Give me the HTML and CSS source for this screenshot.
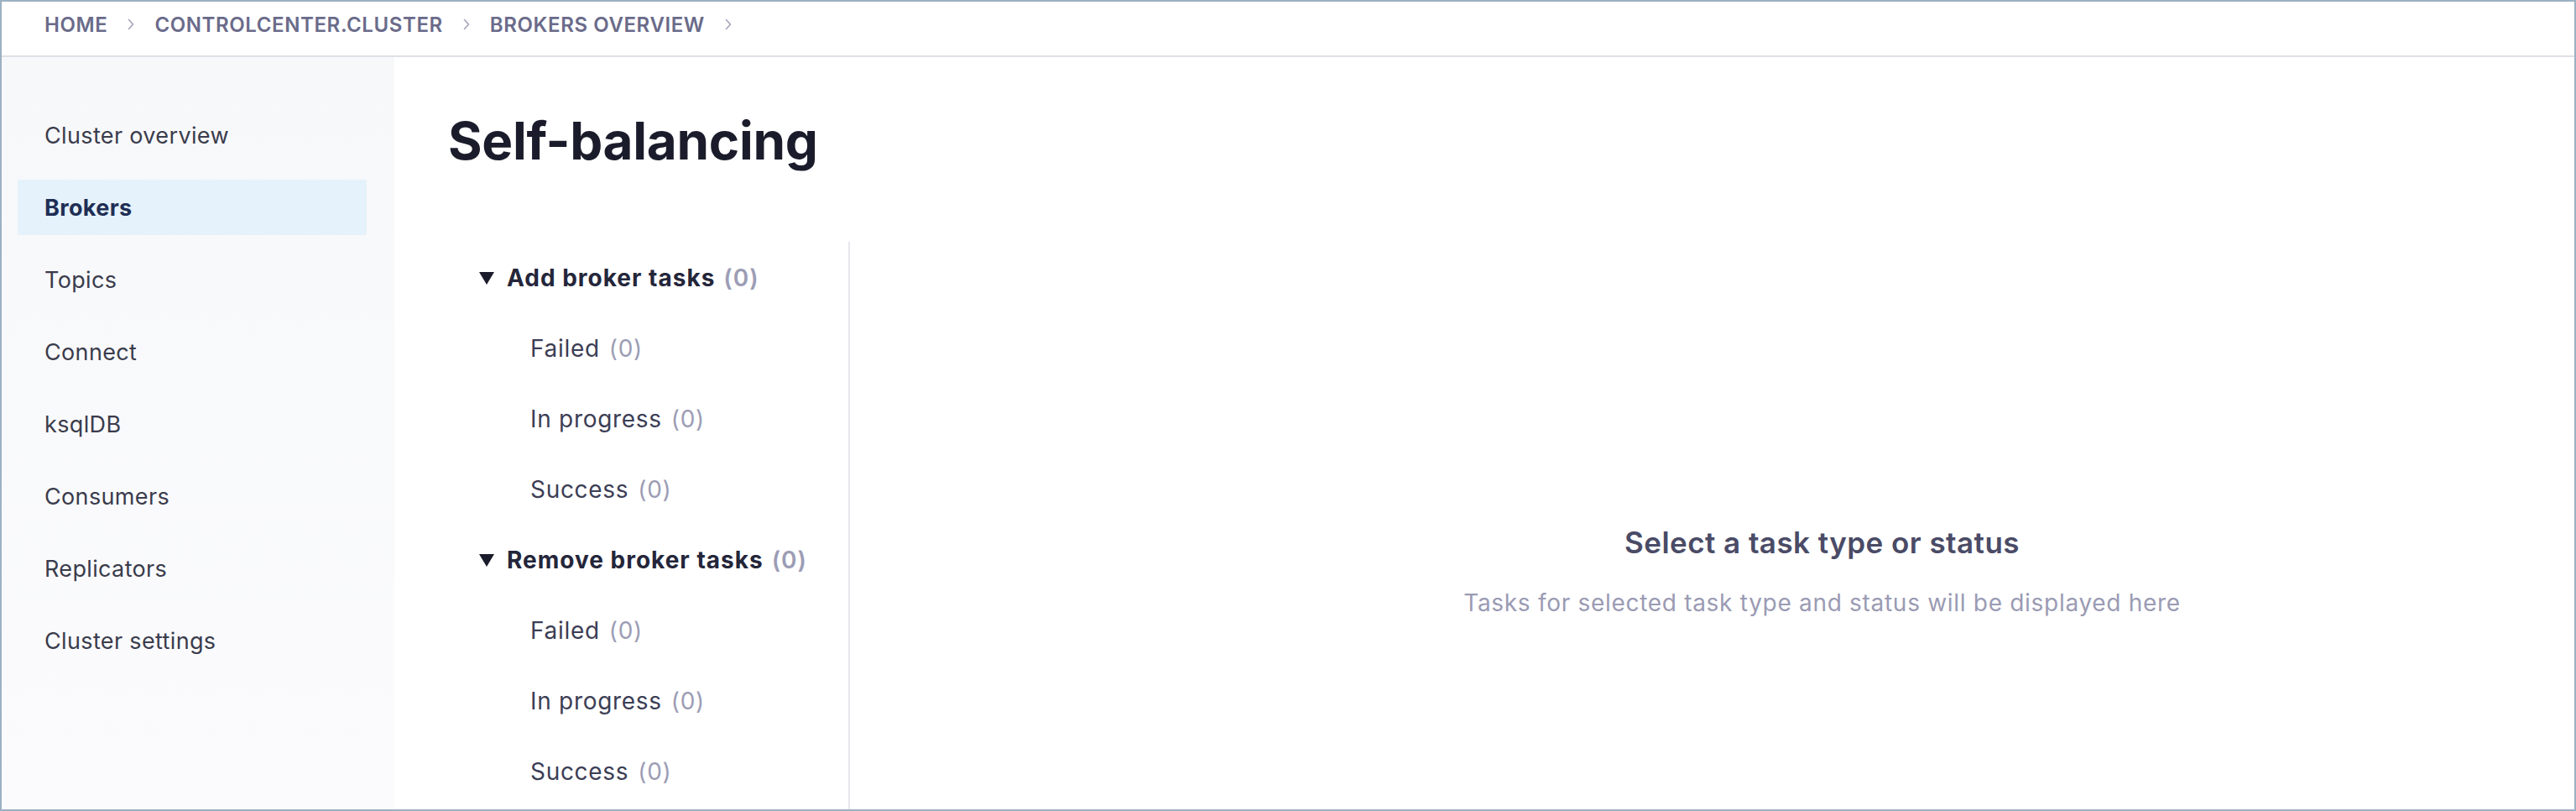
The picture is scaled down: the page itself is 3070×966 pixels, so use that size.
FILE: index.html
```html
<!DOCTYPE html>
<html lang="en">
<head>
<meta charset="utf-8">
<title>Self-balancing</title>
<link rel="stylesheet" href="styles.css">
</head>
<body>
<div class="frame">
  <header class="topbar">
    <nav class="crumbs">
      <span class="crumb">HOME</span>
      <svg class="chev" viewBox="0 0 8 14" width="8" height="14"><path d="M1.5 1.5 L6.5 7 L1.5 12.5" fill="none" stroke="#a3a4ba" stroke-width="1.6" stroke-linecap="round" stroke-linejoin="round"/></svg>
      <span class="crumb">CONTROLCENTER.CLUSTER</span>
      <svg class="chev" viewBox="0 0 8 14" width="8" height="14"><path d="M1.5 1.5 L6.5 7 L1.5 12.5" fill="none" stroke="#a3a4ba" stroke-width="1.6" stroke-linecap="round" stroke-linejoin="round"/></svg>
      <span class="crumb">BROKERS OVERVIEW</span>
      <svg class="chev" viewBox="0 0 8 14" width="8" height="14"><path d="M1.5 1.5 L6.5 7 L1.5 12.5" fill="none" stroke="#a3a4ba" stroke-width="1.6" stroke-linecap="round" stroke-linejoin="round"/></svg>
    </nav>
  </header>
  <div class="body">
    <aside class="sidebar">
      <div class="nav-item">Cluster overview</div>
      <div class="nav-item active">Brokers</div>
      <div class="nav-item">Topics</div>
      <div class="nav-item">Connect</div>
      <div class="nav-item">ksqlDB</div>
      <div class="nav-item">Consumers</div>
      <div class="nav-item">Replicators</div>
      <div class="nav-item">Cluster settings</div>
    </aside>
    <main class="main">
      <h1 class="title">Self-balancing</h1>
      <div class="tasks">
        <div class="task-list">
          <div class="group">
            <div class="group-head"><span class="tri"></span><span class="gname">Add broker tasks</span><span class="count">(0)</span></div>
            <div class="status">Failed <span class="count">(0)</span></div>
            <div class="status">In progress <span class="count">(0)</span></div>
            <div class="status">Success <span class="count">(0)</span></div>
          </div>
          <div class="group">
            <div class="group-head"><span class="tri"></span><span class="gname">Remove broker tasks</span><span class="count">(0)</span></div>
            <div class="status">Failed <span class="count">(0)</span></div>
            <div class="status">In progress <span class="count">(0)</span></div>
            <div class="status">Success <span class="count">(0)</span></div>
          </div>
        </div>
        <section class="empty">
          <h2 class="empty-title">Select a task type or status</h2>
          <p class="empty-sub">Tasks for selected task type and status will be displayed here</p>
        </section>
      </div>
    </main>
  </div>
</div>
</body>
</html>
```
FILE: styles.css
```css
* { box-sizing: border-box; }
html, body { margin: 0; padding: 0; }
body {
  font-family: Inter, "Noto Sans", "Liberation Sans", sans-serif;
  background: #ffffff;
  color: #3b3d4f;
}
.frame {
  width: 3070px;
  height: 966px;
  border: 2px solid #9cb1c2;
  display: flex;
  flex-direction: column;
  overflow: hidden;
}
.topbar {
  height: 66px;
  flex: 0 0 66px;
  border-bottom: 2px solid #dfe1e7;
  display: flex;
  align-items: center;
  padding-left: 51px;
  padding-bottom: 10px;
}
.crumbs {
  display: flex;
  align-items: center;
  gap: 24px;
}
.crumb {
  font-size: 24px;
  font-weight: 600;
  color: #6a6b8a;
  letter-spacing: 0.6px;
}
.chev { display: block; }
.body {
  flex: 1;
  display: flex;
  min-height: 0;
}
.sidebar {
  width: 468px;
  flex: 0 0 468px;
  background: linear-gradient(180deg, #f7f8fa 0%, #fbfbfd 100%);
  padding: 60px 0 0 19px;
  display: flex;
  flex-direction: column;
  gap: 20px;
}
.nav-item {
  width: 416px;
  height: 66px;
  display: flex;
  align-items: center;
  padding-left: 32px;
  font-size: 27px;
  letter-spacing: 0.35px;
  color: #3a3c4c;
  border-radius: 2px;
}
.nav-item.active {
  background: #e5f2fb;
  color: #1f2e55;
  font-weight: 700;
}
.main {
  flex: 1;
  display: flex;
  flex-direction: column;
  padding-left: 64px;
  min-width: 0;
}
.title {
  margin: 0;
  padding-top: 62px;
  font-size: 62px;
  line-height: 76px;
  font-weight: 700;
  color: #1b1c2b;
  letter-spacing: -0.3px;
}
.tasks {
  flex: 1;
  display: flex;
  margin-top: 82px;
  min-height: 0;
}
.task-list {
  width: 479px;
  flex: 0 0 479px;
  border-right: 2px solid #e6e7ec;
  padding-top: 22px;
}
.group-head {
  height: 42px;
  display: flex;
  align-items: center;
  padding-left: 37px;
  font-size: 28px;
  letter-spacing: 1px;
  font-weight: 700;
  color: #24263a;
  margin-bottom: 42px;
}
.tri {
  width: 0;
  height: 0;
  border-left: 9px solid transparent;
  border-right: 9px solid transparent;
  border-top: 15px solid #1b1c2b;
  margin-right: 15px;
}
.gname { margin-right: 10px; }
.count {
  color: #9c9db5;
  font-weight: 400;
}
.group-head .count { font-weight: 600; }
.status {
  height: 42px;
  display: flex;
  align-items: center;
  gap: 11px;
  padding-left: 98px;
  font-size: 28px;
  letter-spacing: 0.7px;
  color: #3c3e55;
  margin-bottom: 42px;
}
.empty {
  flex: 1;
  display: flex;
  flex-direction: column;
  align-items: center;
  padding-left: 262px;
  padding-top: 336px;
}
.empty-title {
  margin: 0;
  font-size: 35px;
  line-height: 44px;
  letter-spacing: 0.45px;
  font-weight: 600;
  color: #4a4b66;
}
.empty-sub {
  margin: 32px 0 0;
  font-size: 28px;
  line-height: 36px;
  letter-spacing: 0.7px;
  color: #9a9bb3;
}
```
